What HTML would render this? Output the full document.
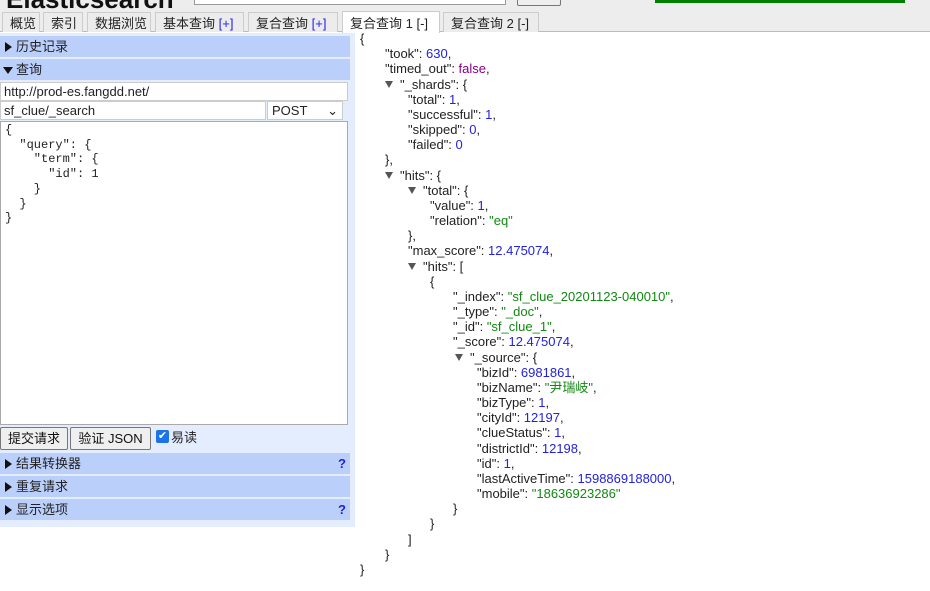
<!DOCTYPE html>
<html><head><meta charset="utf-8"><style>
*{box-sizing:border-box}
body{margin:0;width:930px;height:591px;overflow:hidden;background:#fff;font-family:"Liberation Sans","Noto Sans CJK SC",sans-serif;font-size:13px;color:#222;position:relative}
.hdr{position:absolute;left:0;top:0;width:930px;height:32px;background:#ededed;border-bottom:1px solid #bbb}
.logo{position:absolute;left:6px;top:-16px;font-size:26px;font-weight:bold;color:#111}
.sinput{position:absolute;left:194px;top:-3px;width:312px;height:8px;background:#fff;border:1px solid #999}
.sbtn{position:absolute;left:517px;top:-3px;width:44px;height:9px;background:#eee;border:1px solid #777;border-radius:2px}
.green{position:absolute;left:655px;top:0;width:250px;height:3px;background:#008000}
.tab{position:absolute;top:12px;height:20px;border:1px solid #ccc;border-bottom:none;background:#ececec;padding:0 0 0 7px;line-height:21px;font-size:13px;color:#222;white-space:nowrap}
.tab.on{background:#fff;top:11px;height:22px;line-height:23px}
.b{color:#22e;font-weight:normal}
.lp{position:absolute;left:0;top:33px;width:355px;height:494px;background:#e3edfd}
.row{position:absolute;left:0;width:350px;height:21px;background:#bbcffb;padding:0 0 0 16px;line-height:21px;font-size:13px}
.tri{position:absolute;left:5px;top:6px;width:0;height:0;border-top:5px solid transparent;border-bottom:5px solid transparent;border-left:7px solid #111}
.trid{position:absolute;left:3px;top:8px;width:0;height:0;border-left:5px solid transparent;border-right:5px solid transparent;border-top:7px solid #111}
.q{position:absolute;right:4px;top:0;color:#22c;font-weight:bold}
.inp{position:absolute;background:#fff;border:1px solid #ccc;padding:0 3px;line-height:17px;font-size:13px}
.ta{position:absolute;left:0;top:121px;width:348px;height:304px;background:#fff;border:1px solid #aaa;font-family:"Liberation Mono",monospace;font-size:12px;line-height:14.7px;padding:1px 4px;white-space:pre}
.btn{position:absolute;top:427px;height:23px;background:#efefef;border:1px solid #777;border-radius:2px;font-size:13px;line-height:21px;padding:0;text-align:center;color:#111;white-space:nowrap}
.json{position:absolute;left:0;top:31px;font-size:13px;line-height:15.17px;color:#222}
.json div{position:absolute;white-space:nowrap;height:15.17px}
.n{color:#2222dd}.s{color:#118811}.f{color:#880088}
.t{display:inline-block;width:0;height:0;border-left:4px solid transparent;border-right:4px solid transparent;border-top:7px solid #555;margin-right:7px;vertical-align:1px}
</style></head><body>
<div class="hdr">
<div class="logo">Elasticsearch</div>
<div class="sinput"></div><div class="sbtn"></div><div class="green"></div>
<div class="tab" style="left:2px;width:38px">概览</div>
<div class="tab" style="left:43px;width:40px">索引</div>
<div class="tab" style="left:87px;width:64px">数据浏览</div>
<div class="tab" style="left:155px;width:89px">基本查询 <span class="b">[+]</span></div>
<div class="tab" style="left:248px;width:90px">复合查询 <span class="b">[+]</span></div>
<div class="tab on" style="left:342px;width:98px">复合查询 1 [-]</div>
<div class="tab" style="left:443px;width:96px">复合查询 2 [-]</div>
</div>
<div class="lp">
<div class="row" style="top:3px"><div class="tri"></div>历史记录</div>
<div class="row" style="top:26px"><div class="trid"></div>查询</div>
<div class="inp" style="left:0;top:49px;width:348px;height:19px">http://prod-es.fangdd.net/</div>
<div class="inp" style="left:0;top:68px;width:266px;height:19px">sf_clue/_search</div>
<div class="inp" style="left:267px;top:68px;width:76px;height:19px;padding-left:4px">POST<span style="position:absolute;right:4px;top:0">⌄</span></div>
</div>
<div class="ta">{
  "query": {
    "term": {
      "id": 1
    }
  }
}</div>
<div class="btn" style="left:0;width:68px">提交请求</div>
<div class="btn" style="left:70px;width:81px">验证 JSON</div>
<div style="position:absolute;left:156px;top:430px;width:13px;height:13px;background:#1a73e8;border-radius:2px;color:#fff;font-size:11px;line-height:13px;text-align:center">✔</div>
<div style="position:absolute;left:171px;top:429px;font-size:13px;line-height:18px">易读</div>
<div class="row" style="top:453px"><div class="tri"></div>结果转换器<span class="q">?</span></div>
<div class="row" style="top:476px"><div class="tri"></div>重复请求</div>
<div class="row" style="top:499px"><div class="tri"></div>显示选项<span class="q">?</span></div>
<div class="json">
<div style="left:360px;top:0px">{</div>
<div style="left:385px;top:15.17px">"took": <span class="n">630</span>,</div>
<div style="left:385px;top:30.34px">"timed_out": <span class="f">false</span>,</div>
<div style="left:385px;top:45.51px"><span class="t"></span>"_shards": {</div>
<div style="left:408px;top:60.68px">"total": <span class="n">1</span>,</div>
<div style="left:408px;top:75.85px">"successful": <span class="n">1</span>,</div>
<div style="left:408px;top:91.02px">"skipped": <span class="n">0</span>,</div>
<div style="left:408px;top:106.19px">"failed": <span class="n">0</span></div>
<div style="left:385px;top:121.36px">},</div>
<div style="left:385px;top:136.53px"><span class="t"></span>"hits": {</div>
<div style="left:408px;top:151.7px"><span class="t"></span>"total": {</div>
<div style="left:430px;top:166.87px">"value": <span class="n">1</span>,</div>
<div style="left:430px;top:182.04px">"relation": <span class="s">"eq"</span></div>
<div style="left:408px;top:197.21px">},</div>
<div style="left:408px;top:212.38px">"max_score": <span class="n">12.475074</span>,</div>
<div style="left:408px;top:227.55px"><span class="t"></span>"hits": [</div>
<div style="left:430px;top:242.72px">{</div>
<div style="left:453px;top:257.89px">"_index": <span class="s">"sf_clue_20201123-040010"</span>,</div>
<div style="left:453px;top:273.06px">"_type": <span class="s">"_doc"</span>,</div>
<div style="left:453px;top:288.23px">"_id": <span class="s">"sf_clue_1"</span>,</div>
<div style="left:453px;top:303.4px">"_score": <span class="n">12.475074</span>,</div>
<div style="left:455px;top:318.57px"><span class="t"></span>"_source": {</div>
<div style="left:477px;top:333.74px">"bizId": <span class="n">6981861</span>,</div>
<div style="left:477px;top:348.91px">"bizName": <span class="s">"尹瑞岐"</span>,</div>
<div style="left:477px;top:364.08px">"bizType": <span class="n">1</span>,</div>
<div style="left:477px;top:379.25px">"cityId": <span class="n">12197</span>,</div>
<div style="left:477px;top:394.42px">"clueStatus": <span class="n">1</span>,</div>
<div style="left:477px;top:409.59px">"districtId": <span class="n">12198</span>,</div>
<div style="left:477px;top:424.76px">"id": <span class="n">1</span>,</div>
<div style="left:477px;top:439.93px">"lastActiveTime": <span class="n">1598869188000</span>,</div>
<div style="left:477px;top:455.1px">"mobile": <span class="s">"18636923286"</span></div>
<div style="left:453px;top:470.27px">}</div>
<div style="left:430px;top:485.44px">}</div>
<div style="left:408px;top:500.61px">]</div>
<div style="left:385px;top:515.78px">}</div>
<div style="left:360px;top:530.95px">}</div>
</div>
</body></html>
